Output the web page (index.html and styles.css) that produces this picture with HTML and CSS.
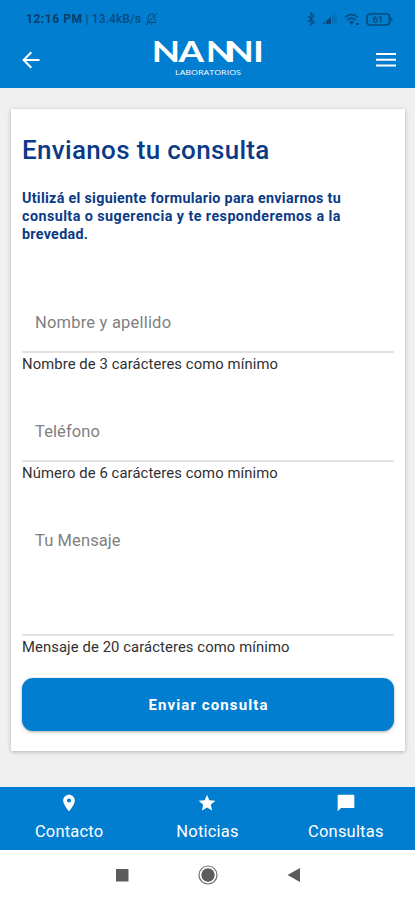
FILE: index.html
```html
<!DOCTYPE html>
<html lang="es">
<head>
<meta charset="utf-8">
<meta name="viewport" content="width=device-width, initial-scale=1">
<title>Envianos tu consulta</title>
<link rel="stylesheet" href="styles.css">
</head>
<body>
<div class="app">
  <header class="header">
    <div class="status">
      <div class="status-left">
        <span class="clock">12:16 PM</span><span class="speed">| 13.4kB/s</span>
        <svg width="13" height="14" viewBox="0 0 13 14" fill="none" stroke="currentColor" stroke-width="1"><path d="M2 10.500h9L9.800 8.500V5.500a3.300 3.500 0 0 0-6.600 0v3zM5.300 12.200h2.400M11.800 1L1 13"/></svg>
      </div>
      <div class="status-right">
        <svg width="8" height="14" viewBox="0 0 8 14" fill="none" stroke="currentColor" stroke-width="1.200"><path d="M1 4l6 6-3 3V1l3 3-6 6"/></svg>
        <svg width="15" height="12" viewBox="0 0 15 12" fill="currentColor"><path d="M0 11l3-2v2zM4 11V8l5-4v7z"/><path d="M10 11V3.500L15 0v11z" opacity=".25"/></svg>
        <svg width="16" height="13" viewBox="0 0 16 13" fill="none" stroke="currentColor" stroke-width="1.500"><path d="M1 4.500q6.500-6 13 0M3.300 7q4.200-3.800 8.400 0"/><path d="M5 9q2.500-2 5 0l-2.500 3zM12 10h3v2h-3z" fill="currentColor" stroke="none"/></svg>
        <svg class="battery" width="27" height="13" viewBox="0 0 27 13"><rect x="1" y="1" width="22.500" height="11" rx="3" fill="none" stroke="currentColor" stroke-width="1.700"/><path d="M24.500 4l2.500 2.500L24.500 9z" fill="currentColor"/><text x="12" y="9.700" text-anchor="middle" fill="currentColor">61</text></svg>
      </div>
    </div>
    <div class="toolbar">
      <svg class="back" width="18" height="18" viewBox="0 0 18 18" fill="none" stroke="#fff" stroke-width="2"><path d="M17.500 9H2M9.300 1.300L1.600 9l7.700 7.700"/></svg>
      <svg class="logo" width="112" height="54" viewBox="0 0 112 54" role="img" aria-label="NANNI Laboratorios">
        <text class="brand" transform="translate(0 28.700) scale(1.300 1)" x="-0.900 19.600 40.600 55.700 77">NANNI</text>
        <text class="brand-sub" x="22" y="42.200" textLength="66" lengthAdjust="spacingAndGlyphs">LABORATORIOS</text>
      </svg>
      <svg class="menu" width="20" height="14" viewBox="0 0 20 14" fill="#fff"><path d="M0 0h20v2H0zM0 5.800h20v2H0zM0 11.600h20v2H0z"/></svg>
    </div>
  </header>
  <main class="content">
    <form class="card">
      <h1 class="title">Envianos tu consulta</h1>
      <p class="intro"><span class="line first">Utilizá el siguiente formulario para enviarnos tu</span><span class="line second">consulta o sugerencia y te responderemos a la</span><span class="line">brevedad.</span></p>
      <div class="field"><span class="placeholder name">Nombre y apellido</span></div>
      <p class="hint">Nombre de 3 carácteres como mínimo</p>
      <div class="field"><span class="placeholder">Teléfono</span></div>
      <p class="hint">Número de 6 carácteres como mínimo</p>
      <div class="field message"><span class="placeholder">Tu Mensaje</span></div>
      <p class="hint">Mensaje de 20 carácteres como mínimo</p>
      <button class="submit" type="button">Enviar consulta</button>
    </form>
  </main>
  <nav class="tabs">
    <a class="tab"><svg width="20" height="20" viewBox="0 0 24 24"><path fill-rule="evenodd" d="M12 2C8.130 2 5 5.130 5 9c0 5.250 7 13 7 13s7-7.750 7-13c0-3.870-3.130-7-7-7zm0 9.500a2.500 2.500 0 1 1 0-5 2.500 2.500 0 0 1 0 5z"/></svg><span>Contacto</span></a>
    <a class="tab"><svg width="20" height="20" viewBox="0 0 24 24"><path d="M12 17.270L18.180 21l-1.640-7.030L22 9.240l-7.190-.610L12 2 9.190 8.630 2 9.240l5.460 4.730L5.820 21z"/></svg><span>Noticias</span></a>
    <a class="tab"><svg width="20" height="20" viewBox="0 0 24 24"><path d="M21 2H3c-.6 0-1 .4-1 1v19l4-4h15c.6 0 1-.4 1-1V3c0-.6-.4-1-1-1z"/></svg><span>Consultas</span></a>
  </nav>
  <div class="system">
    <svg width="20" height="20" viewBox="0 0 20 20"><path d="M4 4h12.500v12.500H4z" fill="#5c5c5c"/></svg>
    <svg width="20" height="20" viewBox="0 0 20 20"><circle cx="10" cy="10" r="9" fill="none" stroke="#6c6c6c" stroke-width="1.200"/><circle cx="10" cy="10" r="6.700" fill="#5c5c5c"/></svg>
    <svg width="20" height="20" viewBox="0 0 20 20"><path d="M3.500 10L16 3v14z" fill="#5c5c5c"/></svg>
  </div>
</div>
</body>
</html>
```
FILE: styles.css
```css
* { box-sizing: border-box; }
body { margin: 0; font-family: Roboto, "Liberation Sans", sans-serif; background: #fff; }
svg { display: block; flex: none; overflow: visible; }
.app { width: 415px; height: 900px; display: flex; flex-direction: column; overflow: hidden; }
.header { height: 88px; flex: none; background: #027ed1; }
.status { height: 33px; padding: 5px 22px 0 26px; display: flex; align-items: center; justify-content: space-between; color: #074b7e; }
.status-left, .status-right { display: flex; align-items: center; }
.status-left { font-size: 12px; font-weight: 500; white-space: nowrap; }
.clock { font-weight: 700; letter-spacing: 0.550px; color: #063f6b; margin-right: 3px; }
.speed { margin-right: 4px; letter-spacing: .1px; }
.status-right { gap: 7px; }
.status-right .battery { margin-left: -1px; }
.battery text { font-size: 9px; font-weight: 700; }
.toolbar { height: 54px; padding: 0 19px 0 22px; display: flex; align-items: center; justify-content: space-between; }
.logo { margin-left: 2px; }
.brand { font-family: Lato, sans-serif; font-weight: 700; font-size: 28.300px; fill: #fff; }
.brand-sub { font-family: "Open Sans", sans-serif; font-size: 8px; fill: #fff; }
.content { flex: 1; background: #f0f0f0; padding: 21px 10px 0 11px; }
.card { height: 642px; background: #fff; padding: 0 11px; box-shadow: 0 1px 4px rgba(0, 0, 0, .25); display: flex; flex-direction: column; }
.title { margin: 24px 0 0; height: 34px; line-height: 34px; font-size: 26px; font-weight: 500; letter-spacing: 0.320px; color: #0b3a86; white-space: nowrap; }
.intro { margin: 22px 0 48px; font-size: 14.300px; line-height: 18px; font-weight: 700; letter-spacing: .3px; color: #0b3a86; white-space: nowrap; }
.line { display: block; }
.line.second { letter-spacing: .450px; }
.field { flex: none; height: 62px; border-bottom: 2px solid #e2e2e2; padding: 20px 13px 0; font-size: 16.500px; line-height: 24px; letter-spacing: .1px; color: #808080; }
.placeholder.name { letter-spacing: .2px; }
.hint { margin: 0 0 25px; height: 22px; line-height: 22px; font-size: 14.800px; letter-spacing: .1px; color: #303030; white-space: nowrap; }
.field.message { height: 127px; }
.submit { border: 0; margin-top: -5px; height: 53px; flex: none; border-radius: 11px; background: #027ed1; color: #fff; font: 700 15px/53px Roboto, sans-serif; letter-spacing: 1.100px; padding: 1px 0 0 1px; box-shadow: 0 1px 3px rgba(0, 0, 0, .35); }
.tabs { height: 63px; flex: none; background: #027ed1; display: grid; grid-template-columns: repeat(3, 1fr); }
.tab { display: flex; flex-direction: column; align-items: center; padding-top: 6px; color: #fff; font-size: 16.500px; line-height: 20px; letter-spacing: .2px; }
.tab svg { fill: #fff; margin-bottom: 9px; }
.system { height: 50px; flex: none; display: flex; justify-content: center; align-items: center; gap: 66px; background: #fff; }
```
